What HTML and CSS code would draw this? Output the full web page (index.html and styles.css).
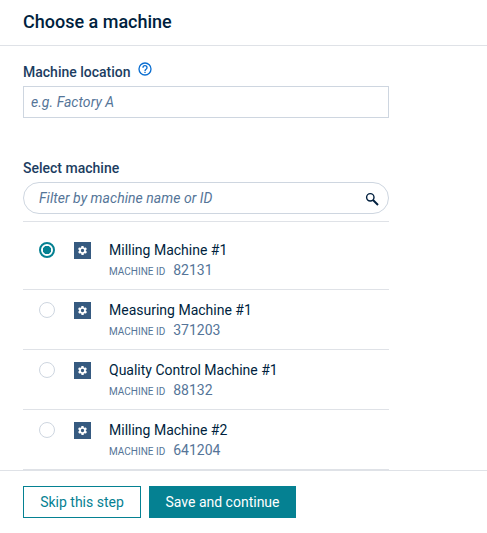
FILE: index.html
```html
<!DOCTYPE html>
<html lang="en">
<head>
<meta charset="utf-8">
<title>Choose a machine</title>
<link rel="stylesheet" href="styles.css">
</head>
<body>
<svg width="0" height="0" class="defs" aria-hidden="true">
  <symbol id="gear" viewBox="2 2 20 20"><path fill="#fff" fill-rule="evenodd" d="M19.4 13a7.500 7.500 0 0 0 0-2l2.100-1.600a.5.5 0 0 0 .1-.7l-2-3.400a.5.5 0 0 0-.6-.2l-2.500 1a7.300 7.300 0 0 0-1.700-1l-.4-2.600a.5.5 0 0 0-.5-.5h-4a.5.5 0 0 0-.5.400l-.4 2.700a7.700 7.700 0 0 0-1.700 1l-2.500-1a.5.5 0 0 0-.6.2l-2 3.400a.5.5 0 0 0 .1.700L4.600 11a7.900 7.900 0 0 0 0 2l-2.100 1.600a.5.5 0 0 0-.1.700l2 3.400c.1.200.4.300.6.200l2.500-1c.5.400 1.100.7 1.700 1l.4 2.600c0 .3.200.5.500.5h4c.2 0 .5-.2.500-.5l.4-2.600a7.300 7.300 0 0 0 1.700-1l2.500 1c.2.100.5 0 .6-.2l2-3.400a.5.5 0 0 0-.1-.7zM12 15.700a3.700 3.700 0 1 1 0-7.400 3.700 3.700 0 0 1 0 7.400z"/></symbol>
</svg>
<div class="panel">
  <header class="header"><h1>Choose a machine</h1></header>
  <main class="content">
    <div class="label-row">
      <label for="loc">Machine location</label>
      <svg class="help" viewBox="0 0 24 24"><path fill="#0a6ed1" d="M11 18h2v-2h-2zm1-16a10 10 0 1 0 0 20 10 10 0 0 0 0-20zm0 18a8 8 0 1 1 0-16 8 8 0 0 1 0 16zm0-14a4 4 0 0 0-4 4h2a2 2 0 1 1 4 0c0 2-3 1.750-3 5h2c0-2.250 3-2.500 3-5a4 4 0 0 0-4-4z"/></svg>
    </div>
    <input id="loc" class="field" type="text" placeholder="e.g. Factory A">
    <label class="select-label" for="filter">Select machine</label>
    <div class="search">
      <input id="filter" type="text" placeholder="Filter by machine name or ID">
      <svg class="magnifier" viewBox="0 0 14 14"><circle cx="5.300" cy="5.300" r="3.700" fill="none" stroke="#001f3e" stroke-width="1.400"/><path d="M8 8l5 5" stroke="#001f3e" stroke-width="2"/></svg>
    </div>
    <ul class="machines">
      <li><span class="radio checked"></span><span class="tile"><svg><use href="#gear"/></svg></span><div class="info"><div class="name">Milling Machine #1</div><div class="meta"><span>MACHINE ID</span><b>82131</b></div></div></li>
      <li><span class="radio"></span><span class="tile"><svg><use href="#gear"/></svg></span><div class="info"><div class="name">Measuring Machine #1</div><div class="meta"><span>MACHINE ID</span><b>371203</b></div></div></li>
      <li><span class="radio"></span><span class="tile"><svg><use href="#gear"/></svg></span><div class="info"><div class="name">Quality Control Machine #1</div><div class="meta"><span>MACHINE ID</span><b>88132</b></div></div></li>
      <li><span class="radio"></span><span class="tile"><svg><use href="#gear"/></svg></span><div class="info"><div class="name">Milling Machine #2</div><div class="meta"><span>MACHINE ID</span><b>641204</b></div></div></li>
    </ul>
  </main>
  <footer class="footer">
    <button class="skip">Skip this step</button>
    <button class="save">Save and continue</button>
  </footer>
</div>
</body>
</html>
```
FILE: styles.css
```css
* { box-sizing: border-box; }
body { margin: 0; background: #fff; color: #001f3e; font: 14px/20px Roboto, sans-serif; overflow: hidden; }
.defs { position: absolute; }
.panel { display: flex; flex-direction: column; height: 533px; }
.header { height: 46px; padding: 10px 23px 0; border-bottom: 1px solid #dfe2e7; }
h1 { margin: 0; font-size: 18px; line-height: 24px; font-weight: 500; }
.content { width: 389px; padding: 16px 0 0 23px; }
label { color: #1c3d61; font-weight: 500; }
.label-row { display: flex; gap: 6px; height: 24px; }
.help { width: 16px; height: 16px; margin-top: -1px; }
input { font: italic 14px/20px Roboto, sans-serif; letter-spacing: .04px; color: #001f3e; outline: 0; }
input::placeholder { color: #557598; opacity: 1; }
.field { display: block; width: 100%; height: 32px; padding: 0 7px; border: 1px solid #ced6e0; }
.select-label { display: block; margin: 40px 0 4px; }
.search { display: flex; align-items: center; height: 32px; padding: 0 9px 0 15px; border: 1px solid #ced6e0; border-radius: 16px; }
.search input { flex: 1; min-width: 0; padding: 0; border: 0; background: none; }
.magnifier { width: 14px; height: 14px; margin-top: 1px; }
.machines { list-style: none; margin: 7px 0 0; padding: 8px 0 0; border-top: 1px solid #dfe2e7; }
.machines li { display: flex; height: 60px; padding: 10px 0 0 16px; border-bottom: 1px solid #dfe2e7; }
.radio { width: 16px; height: 16px; margin-top: 2px; border: 1px solid #ced6e0; border-radius: 50%; }
.radio.checked { border: 2px solid #058192; background: radial-gradient(circle, #058192 3.900px, #fff 4.500px); }
.tile { display: flex; align-items: center; justify-content: center; width: 17px; height: 17px; margin: 2px 0 0 19px; background: #365a80; }
.tile svg { width: 9px; height: 9px; }
.info { margin-left: 18px; }
.name { line-height: 20px; }
.meta { display: flex; align-items: baseline; gap: 8px; color: #557598; }
.meta span { font-size: 10px; }
.meta b { font-weight: 400; }
.footer { display: flex; gap: 8px; padding: 15px 23px; border-top: 1px solid #dfe2e7; }
button { height: 32px; padding: 0; border: 1px solid #058192; font: 14px/20px Roboto, sans-serif; }
.skip { width: 118px; background: #fff; color: #058192; }
.save { width: 147px; background: #058192; color: #fff; }
```
